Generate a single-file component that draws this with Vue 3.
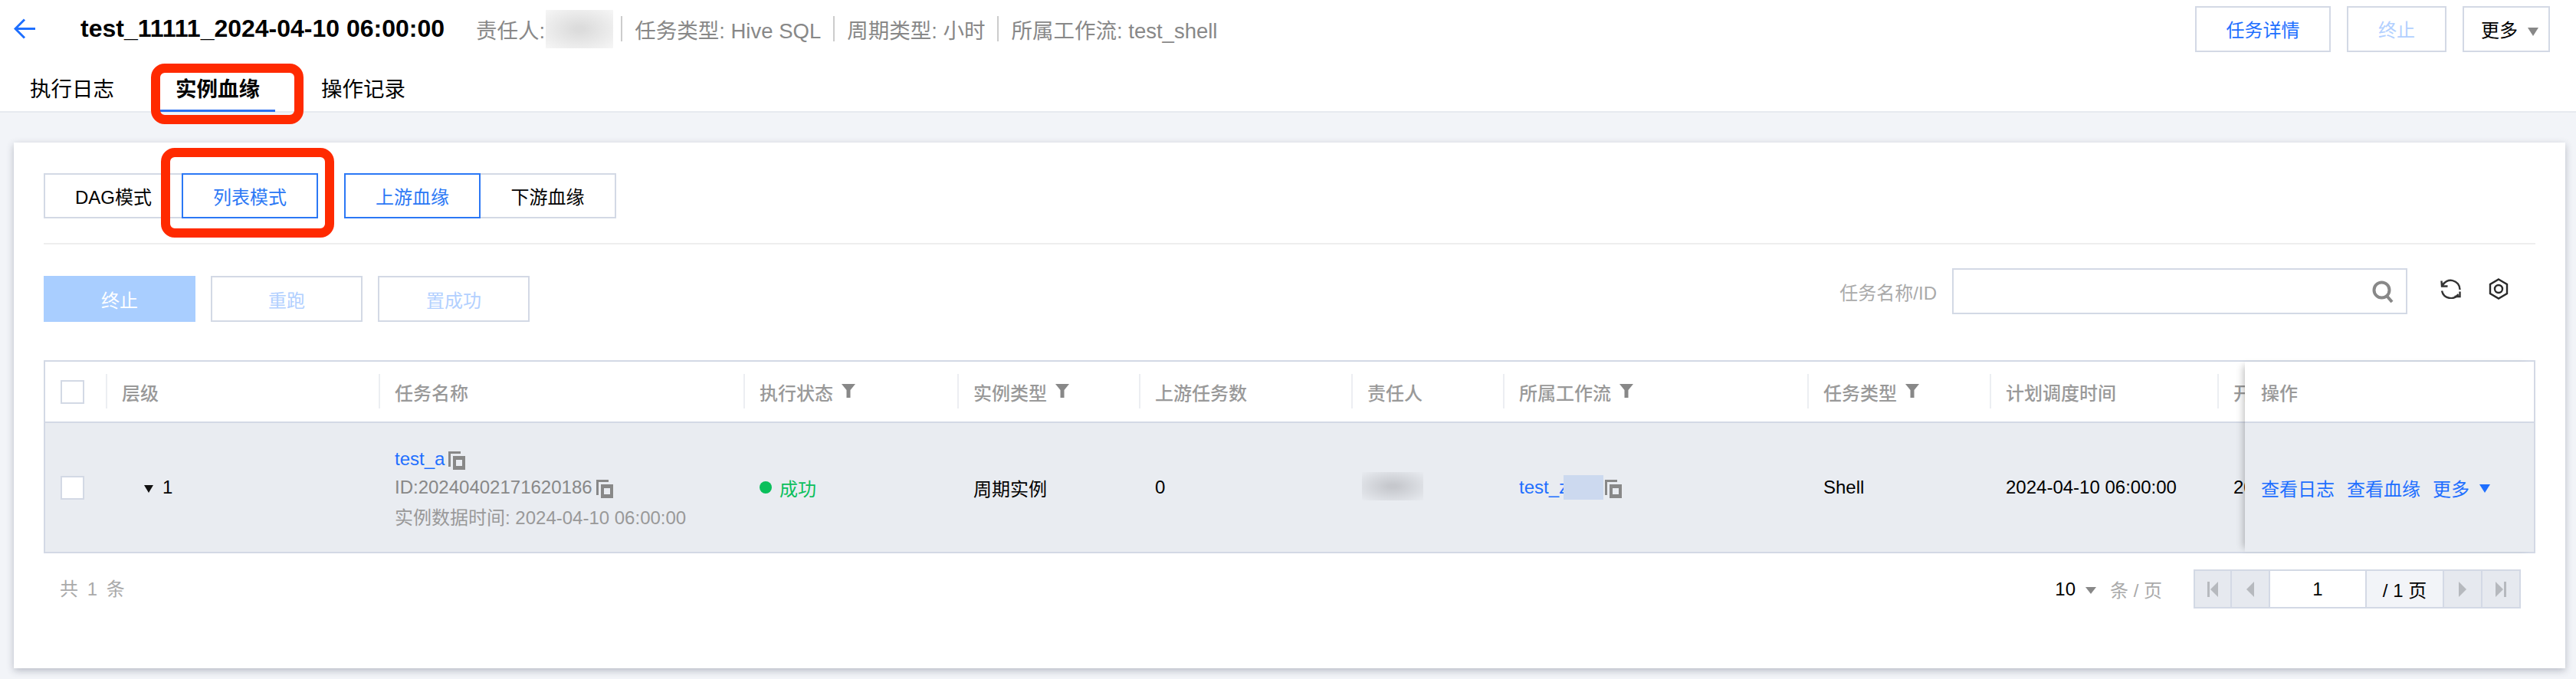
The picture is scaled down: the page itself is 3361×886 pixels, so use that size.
<script setup>
const metaItems = ['任务类型: Hive SQL', '周期类型: 小时', '所属工作流: test_shell']
const tabs = ['执行日志', '实例血缘', '操作记录']

const columns = [
  { title: '层级' },
  { title: '任务名称' },
  { title: '执行状态', filter: true },
  { title: '实例类型', filter: true },
  { title: '上游任务数' },
  { title: '责任人' },
  { title: '所属工作流', filter: true },
  { title: '任务类型', filter: true },
  { title: '计划调度时间' },
  { title: '开始运行时间' },
]
</script>

<template>
  <div class="page">
    <header class="site-header">
      <div class="head-row">
        <svg class="back" width="28" height="27" viewBox="0 0 28 27" fill="none" stroke="#1e6fff" stroke-width="3">
          <path d="M2 13.5H28M14 1.5 2 13.5l12 12" />
        </svg>
        <h1 class="title">test_11111_2024-04-10 06:00:00</h1>
        <div class="meta">
          <span class="meta-owner">责任人:<i class="blur blur-owner"></i></span>
          <template v-for="item in metaItems" :key="item">
            <i class="meta-sep"></i>
            <span>{{ item }}</span>
          </template>
        </div>
        <div class="head-actions">
          <button class="btn btn-detail link" type="button">任务详情</button>
          <button class="btn btn-stop faded" type="button">终止</button>
          <button class="btn btn-more" type="button">更多<i class="caret"></i></button>
        </div>
      </div>
      <nav class="tabs">
        <div v-for="(tab, i) in tabs" :key="tab" class="tab" :class="{ active: i === 1 }">{{ tab }}</div>
      </nav>
    </header>

    <main class="card">
      <div class="mode-row">
        <div class="seg">
          <button class="seg-btn seg-dag" type="button">DAG模式</button>
          <button class="seg-btn seg-list on" type="button">列表模式</button>
        </div>
        <div class="seg">
          <button class="seg-btn seg-list on" type="button">上游血缘</button>
          <button class="seg-btn seg-down" type="button">下游血缘</button>
        </div>
      </div>

      <div class="toolbar">
        <div class="tool-btns">
          <button class="btn tool primary" type="button">终止</button>
          <button class="btn tool faded" type="button">重跑</button>
          <button class="btn tool faded" type="button">置成功</button>
        </div>
        <div class="search-wrap">
          <label class="search-label">任务名称/ID</label>
          <div class="search-input">
            <svg width="29" height="29" viewBox="0 0 29 29" fill="none" stroke="#888" stroke-width="4">
              <circle cx="12.5" cy="12.5" r="10" />
              <path d="M19 20l7 8" />
            </svg>
          </div>
          <svg class="icon-refresh" width="28" height="26" viewBox="0 0 28 26" fill="none" stroke="#333" stroke-width="2.4">
            <path d="M2.500 9A12 12 0 0 1 25.500 14" />
            <path d="M1.500 2.500 2 9.500h7.500" />
            <path d="M2 15.500A12 12 0 0 0 23.500 20" />
            <path d="M25.500 16.500v6.500h-7" />
          </svg>
          <svg class="icon-gear" width="26" height="28" viewBox="0 0 26 28" fill="none" stroke="#2a2a2a" stroke-width="2.4">
            <path d="M13 1.500 24 8v12l-11 6.500L2 20V8z" />
            <circle cx="13" cy="14" r="5" />
          </svg>
        </div>
      </div>

      <section class="table">
        <div class="scroll">
          <div class="grid head">
            <div class="cell check-cell"><i class="checkbox"></i></div>
            <div v-for="col in columns" :key="col.title" class="cell th">
              {{ col.title }}
              <svg v-if="col.filter" class="filter" width="18" height="18" viewBox="0 0 18 18" fill="#888">
                <path d="M0 0h18l-6.500 8v10h-5V8z" />
              </svg>
            </div>
          </div>
          <div class="grid row">
            <div class="cell check-cell"><i class="checkbox"></i></div>
            <div class="cell td level"><i class="tree-arrow"></i>1</div>
            <div class="cell td name-cell">
              <div class="name-line">
                <a class="link">test_a</a>
                <svg class="copy" width="22" height="24" viewBox="0 0 22 24" fill="#888">
                  <path d="M0 0h16v3H3v17H0z" />
                  <path fill-rule="evenodd" d="M6 6h16v18H6zM10 11v8h8v-8z" />
                </svg>
              </div>
              <div class="name-line id-line">
                ID:20240402171620186
                <svg class="copy" width="22" height="24" viewBox="0 0 22 24" fill="#888">
                  <path d="M0 0h16v3H3v17H0z" />
                  <path fill-rule="evenodd" d="M6 6h16v18H6zM10 11v8h8v-8z" />
                </svg>
              </div>
              <div class="name-line data-line">实例数据时间: 2024-04-10 06:00:00</div>
            </div>
            <div class="cell td status"><i class="dot"></i>成功</div>
            <div class="cell td">周期实例</div>
            <div class="cell td">0</div>
            <div class="cell td owner-cell"><i class="blur blur-person"></i></div>
            <div class="cell td flow-cell">
              <a class="link">test_z</a><i class="blur blur-flow"></i>
              <svg class="copy" width="22" height="24" viewBox="0 0 22 24" fill="#888">
                <path d="M0 0h16v3H3v17H0z" />
                <path fill-rule="evenodd" d="M6 6h16v18H6zM10 11v8h8v-8z" />
              </svg>
            </div>
            <div class="cell td">Shell</div>
            <div class="cell td">2024-04-10 06:00:00</div>
            <div class="cell td">2024-04-10 06:00:00</div>
          </div>
        </div>
        <div class="fixed-col">
          <div class="fixed-head">操作</div>
          <div class="fixed-row">
            <a class="link">查看日志</a>
            <a class="link">查看血缘</a>
            <a class="link">更多<i class="caret caret-blue"></i></a>
          </div>
        </div>
      </section>

      <footer class="foot">
        <span class="total">共 1 条</span>
        <div class="pager-wrap">
          <span class="page-size">10<i class="caret caret-size"></i></span>
          <span class="per-page">条 / 页</span>
          <div class="pager">
            <div class="pg-btn">
              <svg width="14" height="20" viewBox="0 0 14 20" fill="#b6b9be"><path d="M0 0h3v20H0zM14 0v20L4 10z" /></svg>
            </div>
            <div class="pg-btn">
              <svg width="10" height="20" viewBox="0 0 10 20" fill="#b6b9be"><path d="M10 0v20L0 10z" /></svg>
            </div>
            <div class="pg-input">1</div>
            <div class="pg-label">/ 1 页</div>
            <div class="pg-btn">
              <svg width="10" height="20" viewBox="0 0 10 20" fill="#b6b9be"><path d="M0 0v20l10-10z" /></svg>
            </div>
            <div class="pg-btn pg-last">
              <svg width="14" height="20" viewBox="0 0 14 20" fill="#b6b9be"><path d="M0 0v20l10-10zM11 0h3v20h-3z" /></svg>
            </div>
          </div>
        </div>
      </footer>
    </main>

    <!-- 红色标注框 -->
    <div class="mark mark-tab"></div>
    <div class="mark mark-mode"></div>
  </div>
</template>

<style scoped>
.page {
  position: relative;
  height: 886px;
  overflow: hidden;
  font-family: "Liberation Sans", "Noto Sans CJK SC", sans-serif;
  font-size: 24px;
  color: #000;
}

.site-header {
  box-sizing: border-box;
  height: 147px;
  background: #fff;
  border-bottom: 2px solid #e7eaef;
}
.head-row {
  display: flex;
  align-items: center;
  height: 59px;
  padding: 8px 34px 0 18px;
}
.back { flex: none; margin-right: 59px; }
.title {
  margin: 0;
  font-size: 32px;
  font-weight: 700;
  white-space: nowrap;
}
.meta {
  display: flex;
  align-items: center;
  gap: 16px;
  margin-left: 41px;
  font-size: 27.5px;
  color: #888;
  white-space: nowrap;
}
.meta-owner {
  display: flex;
  align-items: center;
  margin-right: -6px;
}
.meta-sep {
  width: 2px;
  height: 33px;
  background: #ccc;
}
.blur { display: block; flex: none; }
.blur-owner {
  width: 88px;
  height: 50px;
  margin-left: 1px;
  background: radial-gradient(ellipse at center, #dcdcdc 10%, #f6f6f6 100%);
}
.head-actions {
  display: flex;
  gap: 21px;
  margin-left: auto;
}

.btn {
  box-sizing: border-box;
  height: 60px;
  padding: 0;
  border: 2px solid #d3d9e5;
  background: #fff;
  font: inherit;
  font-size: 24px;
  color: #000;
}
.btn-detail { width: 177px; }
.btn-stop { width: 130px; }
.btn-more { width: 114px; padding-left: 9px; }
.link { color: #1e6fff; text-decoration: none; }
.faded { color: #b2d0ff; }
.caret {
  display: inline-block;
  width: 0;
  height: 0;
  margin-left: 13px;
  vertical-align: middle;
  border-style: solid;
  border-width: 11px 7.5px 0;
  border-color: #888 transparent transparent;
}

.tabs {
  display: flex;
  gap: 40px;
  padding-left: 19px;
}
.tab {
  box-sizing: border-box;
  width: 150px;
  height: 79px;
  padding-top: 30px;
  border-bottom: 3px solid transparent;
  font-size: 27.5px;
  line-height: 40px;
  text-align: center;
}
.tab.active {
  font-weight: 700;
  border-bottom-color: #2b70f0;
}

.card {
  box-sizing: border-box;
  height: 686px;
  margin: 39px 14px 0 18px;
  padding: 40px 39px 0;
  background: #fff;
  box-shadow: 0 3px 9px rgba(50, 55, 80, 0.3);
}
.mode-row {
  display: flex;
  gap: 34px;
  height: 91px;
  border-bottom: 2px solid #eee;
}
.seg { display: flex; height: 59px; }
.seg-btn {
  box-sizing: border-box;
  height: 59px;
  padding: 0;
  border: 2px solid #d3d9e5;
  background: #fff;
  font: inherit;
  font-size: 24px;
  color: #000;
}
.seg-dag { width: 180px; border-right: 0; }
.seg-list { width: 178px; }
.seg-down { width: 177px; border-left: 0; }
.seg-btn.on {
  border-color: #2b78f5;
  color: #2b78f5;
}

.toolbar {
  display: flex;
  justify-content: space-between;
  align-items: flex-start;
  height: 70px;
  padding-top: 31px;
  margin-bottom: 50px;
}
.tool-btns {
  display: flex;
  gap: 20px;
  margin-top: 10px;
}
.tool { width: 198px; }
.tool.primary {
  border-color: #a9ceff;
  background: #a9ceff;
  color: #fff;
}
.search-wrap {
  display: flex;
  align-items: center;
  height: 60px;
}
.search-label {
  margin-right: 20px;
  color: #aaa;
}
.search-input {
  box-sizing: border-box;
  display: flex;
  align-items: center;
  justify-content: flex-end;
  width: 594px;
  height: 60px;
  padding-right: 15px;
  border: 2px solid #d3d9e5;
}
.icon-refresh { margin: -6px 0 0 43px; }
.icon-gear { margin: -6px 35px 0 35px; }

.table {
  display: flex;
  box-sizing: border-box;
  height: 252px;
  border: 2px solid #d3d9e5;
}
.scroll {
  flex: 1;
  min-width: 0;
  overflow: hidden;
}
.grid {
  display: grid;
  grid-template-columns: 79px 356px 476px 279px 237px 277px 198px 397px 238px 297px 297px;
  width: 3131px;
}
.head {
  box-sizing: border-box;
  height: 80px;
  border-bottom: 2px solid #d3d9e5;
}
.row {
  height: 168px;
  background: #e9ecf1;
}
.cell {
  display: flex;
  align-items: center;
  position: relative;
  padding-left: 21px;
  white-space: nowrap;
}
.check-cell { padding-left: 20px; }
.checkbox {
  box-sizing: border-box;
  display: block;
  width: 31px;
  height: 31px;
  border: 2px solid #d3d9e5;
  background: #fff;
}
.th {
  color: #999;
  font-weight: 500;
}
.th::before {
  content: '';
  position: absolute;
  left: 0;
  top: 16px;
  height: 45px;
  width: 2px;
  background: #eceef2;
}
.filter { margin: -3px 0 0 11px; }
.level { padding-left: 50px; }
.tree-arrow {
  width: 0;
  height: 0;
  margin: 4px 12px 0 0;
  border-style: solid;
  border-width: 10px 6px 0;
  border-color: #111 transparent transparent;
}
.name-cell {
  flex-direction: column;
  align-items: flex-start;
  justify-content: center;
}
.name-line {
  display: flex;
  align-items: center;
  height: 37.5px;
}
.copy { flex: none; margin: 4px 0 0 5px; }
.id-line { color: #888; }
.data-line { color: #999; }
.status { color: #0abf5b; }
.dot {
  width: 16px;
  height: 16px;
  margin-right: 10px;
  border-radius: 50%;
  background: #0abf5b;
}
.blur-person {
  width: 80px;
  height: 37px;
  margin: -4px 0 0 -7px;
  background: radial-gradient(ellipse at center, #c6c8cd 10%, #e8ebf0 100%);
}
.blur-flow {
  width: 52px;
  height: 32px;
  margin-left: -6px;
  background: #ccd9ef;
}
.flow-cell .copy { margin-left: 2px; }

.fixed-col {
  position: relative;
  flex: none;
  width: 377px;
  box-shadow: -7px 0 9px -5px rgba(0, 0, 0, 0.25);
}
.fixed-head {
  box-sizing: border-box;
  display: flex;
  align-items: center;
  height: 80px;
  padding-left: 21px;
  border-bottom: 2px solid #d3d9e5;
  background: #fff;
  color: #999;
  font-weight: 500;
}
.fixed-row {
  display: flex;
  align-items: center;
  gap: 16px;
  height: 168px;
  padding-left: 21px;
  background: #e9ecf1;
}
.caret-blue {
  border-top-color: #1e6fff;
  margin: -6px 0 0 13px;
}

.foot {
  display: flex;
  justify-content: space-between;
  align-items: center;
  height: 51px;
  margin-top: 21px;
  padding: 0 19px 0 21px;
}
.total {
  margin-top: -4px;
  color: #aaa;
  word-spacing: 5px;
}
.pager-wrap {
  display: flex;
  align-items: center;
}
.caret-size { border-width: 9px 7.5px 0; margin-left: 13px; }
.per-page {
  margin: 0 41px 0 18px;
  color: #aaa;
}
.pager {
  box-sizing: border-box;
  display: flex;
  height: 51px;
  border: 2px solid #d3d9e5;
}
.pager > div {
  display: flex;
  align-items: center;
  justify-content: center;
  box-sizing: border-box;
  height: 47px;
}
.pg-btn {
  width: 50px;
  background: #e6e9ef;
  border-right: 2px solid #d3d9e5;
}
.pg-last { width: 48px; border-right: 0; }
.pager > .pg-btn:first-child { width: 48px; }
.pg-input { width: 126px; background: #fff; border-right: 2px solid #d3d9e5; }
.pg-label { width: 101px; background: #f2f4f8; border-right: 2px solid #d3d9e5; }

.mark {
  position: absolute;
  box-sizing: border-box;
  border: 12px solid #ff2a00;
  border-radius: 18px;
  pointer-events: none;
}
.mark-tab {
  left: 197px;
  top: 83px;
  width: 199px;
  height: 79px;
}
.mark-mode {
  left: 210px;
  top: 193px;
  width: 226px;
  height: 117px;
}
</style>

<style>
body {
  background: #f2f4f8;
}
</style>
